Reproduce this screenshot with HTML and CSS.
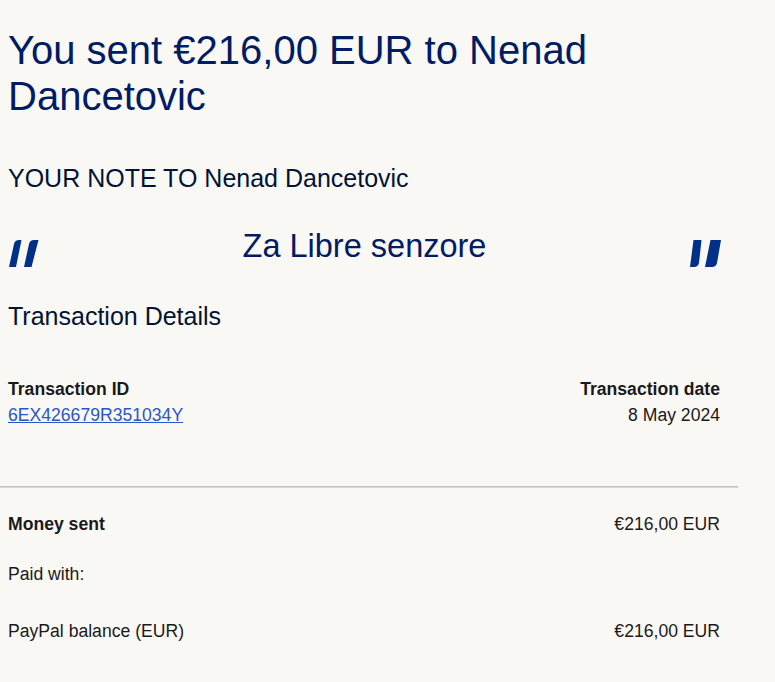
FILE: index.html
```html
<!DOCTYPE html>
<html lang="en">
<head>
<meta charset="utf-8">
<link rel="stylesheet" href="styles.css">
</head>
<body>
<main class="page">
  <section class="block">
    <h1 class="title">You sent €216,00 EUR to Nenad Dancetovic</h1>
    <h2 class="note-label">YOUR NOTE TO Nenad Dancetovic</h2>
    <div class="quote">
      <svg class="qmark" width="32" height="27" viewBox="0 0 32 27"><path d="M6 4 Q7 0 11 0 L13.5 0 L8 27 L1 27 Z M21 4 Q22 0 26 0 L30.5 0 L23.5 27 L16 27 Z" fill="#003087"/></svg>
      <p class="quote-text">Za Libre senzore</p>
      <svg class="qmark qright" width="32" height="27" viewBox="0 0 32 27"><path d="M4.5 0 L12.5 0 L10 23 Q9 27 5 27 L1 27 Z M21.5 0 L32 0 L28 23 Q27 27 23 27 L16 27 Z" fill="#003087"/></svg>
    </div>
    <h2 class="section-title">Transaction Details</h2>
    <div class="row meta">
      <div class="col">
        <div class="label">Transaction ID</div>
        <a class="link" href="#">6EX426679R351034Y</a>
      </div>
      <div class="col right">
        <div class="label">Transaction date</div>
        <div class="value">8 May 2024</div>
      </div>
    </div>
  </section>
  <hr class="divider">
  <section class="block">
    <div class="row line first">
      <span class="label">Money sent</span>
      <span class="value">€216,00 EUR</span>
    </div>
    <div class="row line paid">
      <span class="value">Paid with:</span>
    </div>
    <div class="row line last">
      <span class="value">PayPal balance (EUR)</span>
      <span class="value">€216,00 EUR</span>
    </div>
  </section>
</main>
</body>
</html>
```
FILE: styles.css
```css
html, body {
  margin: 0;
  padding: 0;
  background: #faf8f5;
}
body {
  font-family: "Liberation Sans", Arial, sans-serif;
  color: #1a1a1a;
}
.page {
  width: 738px;
}
.block {
  padding: 0 18px 0 8px;
}
.title {
  margin: 0;
  padding-top: 27px;
  font-size: 40px;
  line-height: 46px;
  font-weight: 400;
  color: #001c64;
}
.note-label {
  margin: 44px 0 0;
  font-size: 25px;
  line-height: 30px;
  font-weight: 400;
  color: #001435;
}
.quote {
  display: flex;
  align-items: flex-start;
  justify-content: space-between;
  margin-top: 33px;
}
.qmark {
  margin-top: 14px;
  flex: none;
}
.qright {
  margin-right: -1px;
}
.quote-text {
  margin: 0;
  font-size: 32.5px;
  line-height: 40px;
  color: #001c64;
}
.section-title {
  margin: 34px 0 0;
  font-size: 25px;
  line-height: 30px;
  font-weight: 400;
  color: #001435;
}
.row {
  display: flex;
  justify-content: space-between;
}
.meta {
  margin-top: 48px;
}
.col {
  display: flex;
  flex-direction: column;
  gap: 6px;
}
.col.right {
  align-items: flex-end;
}
.label {
  font-size: 17.6px;
  line-height: 20px;
  font-weight: 700;
  color: #1a1a1a;
}
.value {
  font-size: 17.6px;
  line-height: 20px;
  color: #1a1a1a;
}
.link {
  font-size: 17.6px;
  line-height: 20px;
  color: #2956c9;
}
.divider {
  margin: 61px 0 0;
  border: 0;
  border-top: 1px solid #c4c4c4;
  border-bottom: 1px solid #d8d8d8;
  height: 0;
}
.line.first {
  margin-top: 26px;
}
.line.paid {
  margin-top: 30px;
}
.line.last {
  margin-top: 37px;
}
```
